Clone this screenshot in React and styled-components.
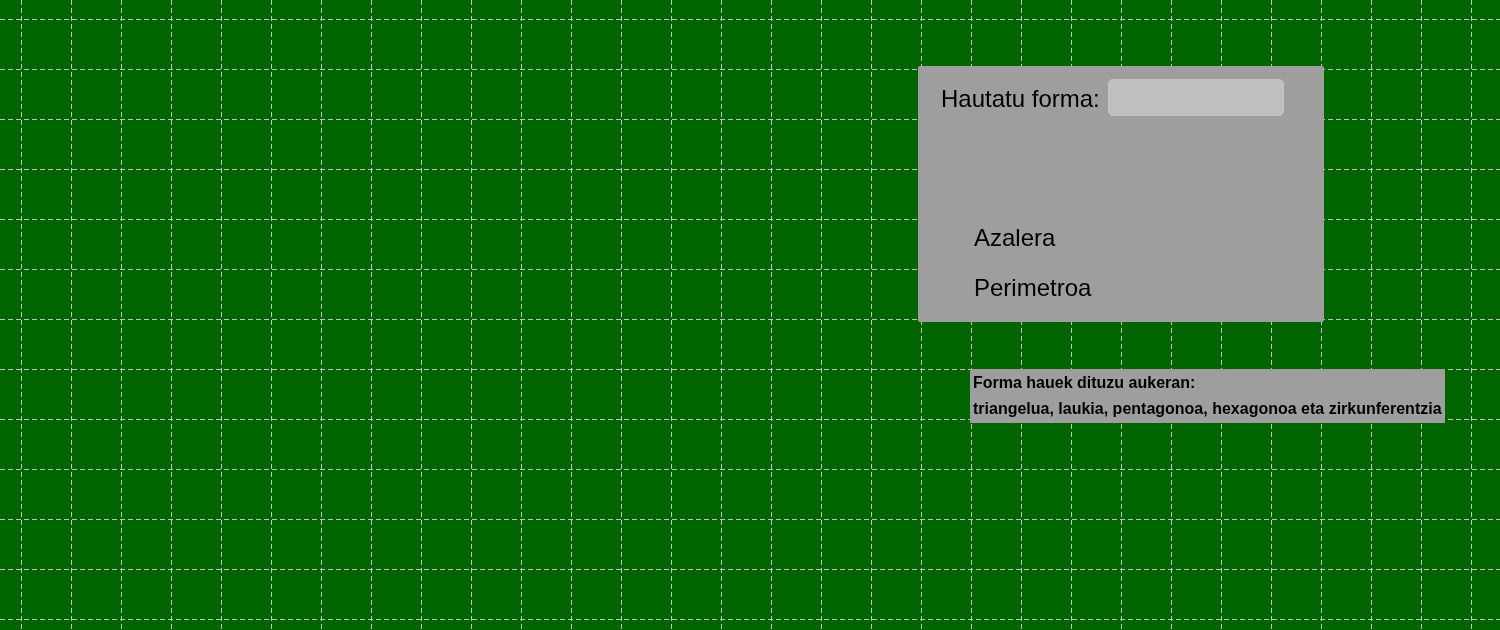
import styled, { createGlobalStyle } from "styled-components";

const GlobalStyle = createGlobalStyle`
  html, body {
    margin: 0;
    padding: 0;
    background-color: #006400;
    overflow: hidden;
  }
  body {
    font-family: "Liberation Sans", Arial, sans-serif;
  }
`;

const GridCanvas = styled.svg`
  position: fixed;
  top: 0;
  left: 0;
  width: 1500px;
  height: 630px;
  z-index: 0;
  pointer-events: none;
`;

const Page = styled.div`
  position: relative;
  z-index: 1;
  min-height: 630px;
  box-sizing: border-box;
  padding: 66px 0 0 918px;
  display: flex;
  flex-direction: column;
  align-items: flex-start;
`;

const Panel = styled.div`
  width: 406px;
  height: 256px;
  box-sizing: border-box;
  background-color: #9e9e9e;
  border-radius: 2px;
  padding: 13px 0 0 23px;
  display: flex;
  flex-direction: column;
`;

const ChooseRow = styled.div`
  display: flex;
  align-items: center;
  gap: 8px;
  height: 37px;
`;

const Label = styled.span`
  font-size: 24px;
  color: #000;
  padding-top: 3px;
`;

const ShapeSelect = styled.div`
  width: 176px;
  height: 37px;
  box-sizing: border-box;
  background-color: #bfbfbf;
  border: 1px solid #c4c4c4;
  border-radius: 5px;
`;

const ResultList = styled.ul`
  list-style: none;
  margin: 97px 0 0 33px;
  padding: 0;
`;

const ResultItem = styled.li`
  font-size: 24px;
  line-height: 50px;
  color: #000;
`;

const InfoBox = styled.div`
  margin: 47px 0 0 52px;
  padding: 1px 3px 1px 3px;
  background-color: #9e9e9e;
  font-size: 16px;
  font-weight: bold;
  line-height: 26px;
  color: #000;
  white-space: nowrap;
`;

const verticals = Array.from({ length: 30 }, (_, i) => 21 + i * 50);
const horizontals = Array.from({ length: 13 }, (_, i) => 19 + i * 50);

function Grid() {
  return (
    <GridCanvas viewBox="0 0 1500 630">
      {verticals.map((x) => (
        <line
          key={"v" + x}
          x1={x + 0.5}
          y1={0}
          x2={x + 0.5}
          y2={630}
          stroke="#c4c4c4"
          strokeWidth="1"
          strokeDasharray="5 3"
        />
      ))}
      {horizontals.map((y) => (
        <line
          key={"h" + y}
          x1={0}
          y1={y + 0.5}
          x2={1500}
          y2={y + 0.5}
          stroke="#c4c4c4"
          strokeWidth="1"
          strokeDasharray="5 3"
        />
      ))}
    </GridCanvas>
  );
}

function App() {
  return (
    <>
      <GlobalStyle />
      <Grid />
      <Page>
        <Panel>
          <ChooseRow>
            <Label>Hautatu forma:</Label>
            <ShapeSelect />
          </ChooseRow>
          <ResultList>
            <ResultItem>Azalera</ResultItem>
            <ResultItem>Perimetroa</ResultItem>
          </ResultList>
        </Panel>
        <InfoBox>
          Forma hauek dituzu aukeran:
          <br />
          triangelua, laukia, pentagonoa, hexagonoa eta zirkunferentzia
        </InfoBox>
      </Page>
    </>
  );
}

export default App;
